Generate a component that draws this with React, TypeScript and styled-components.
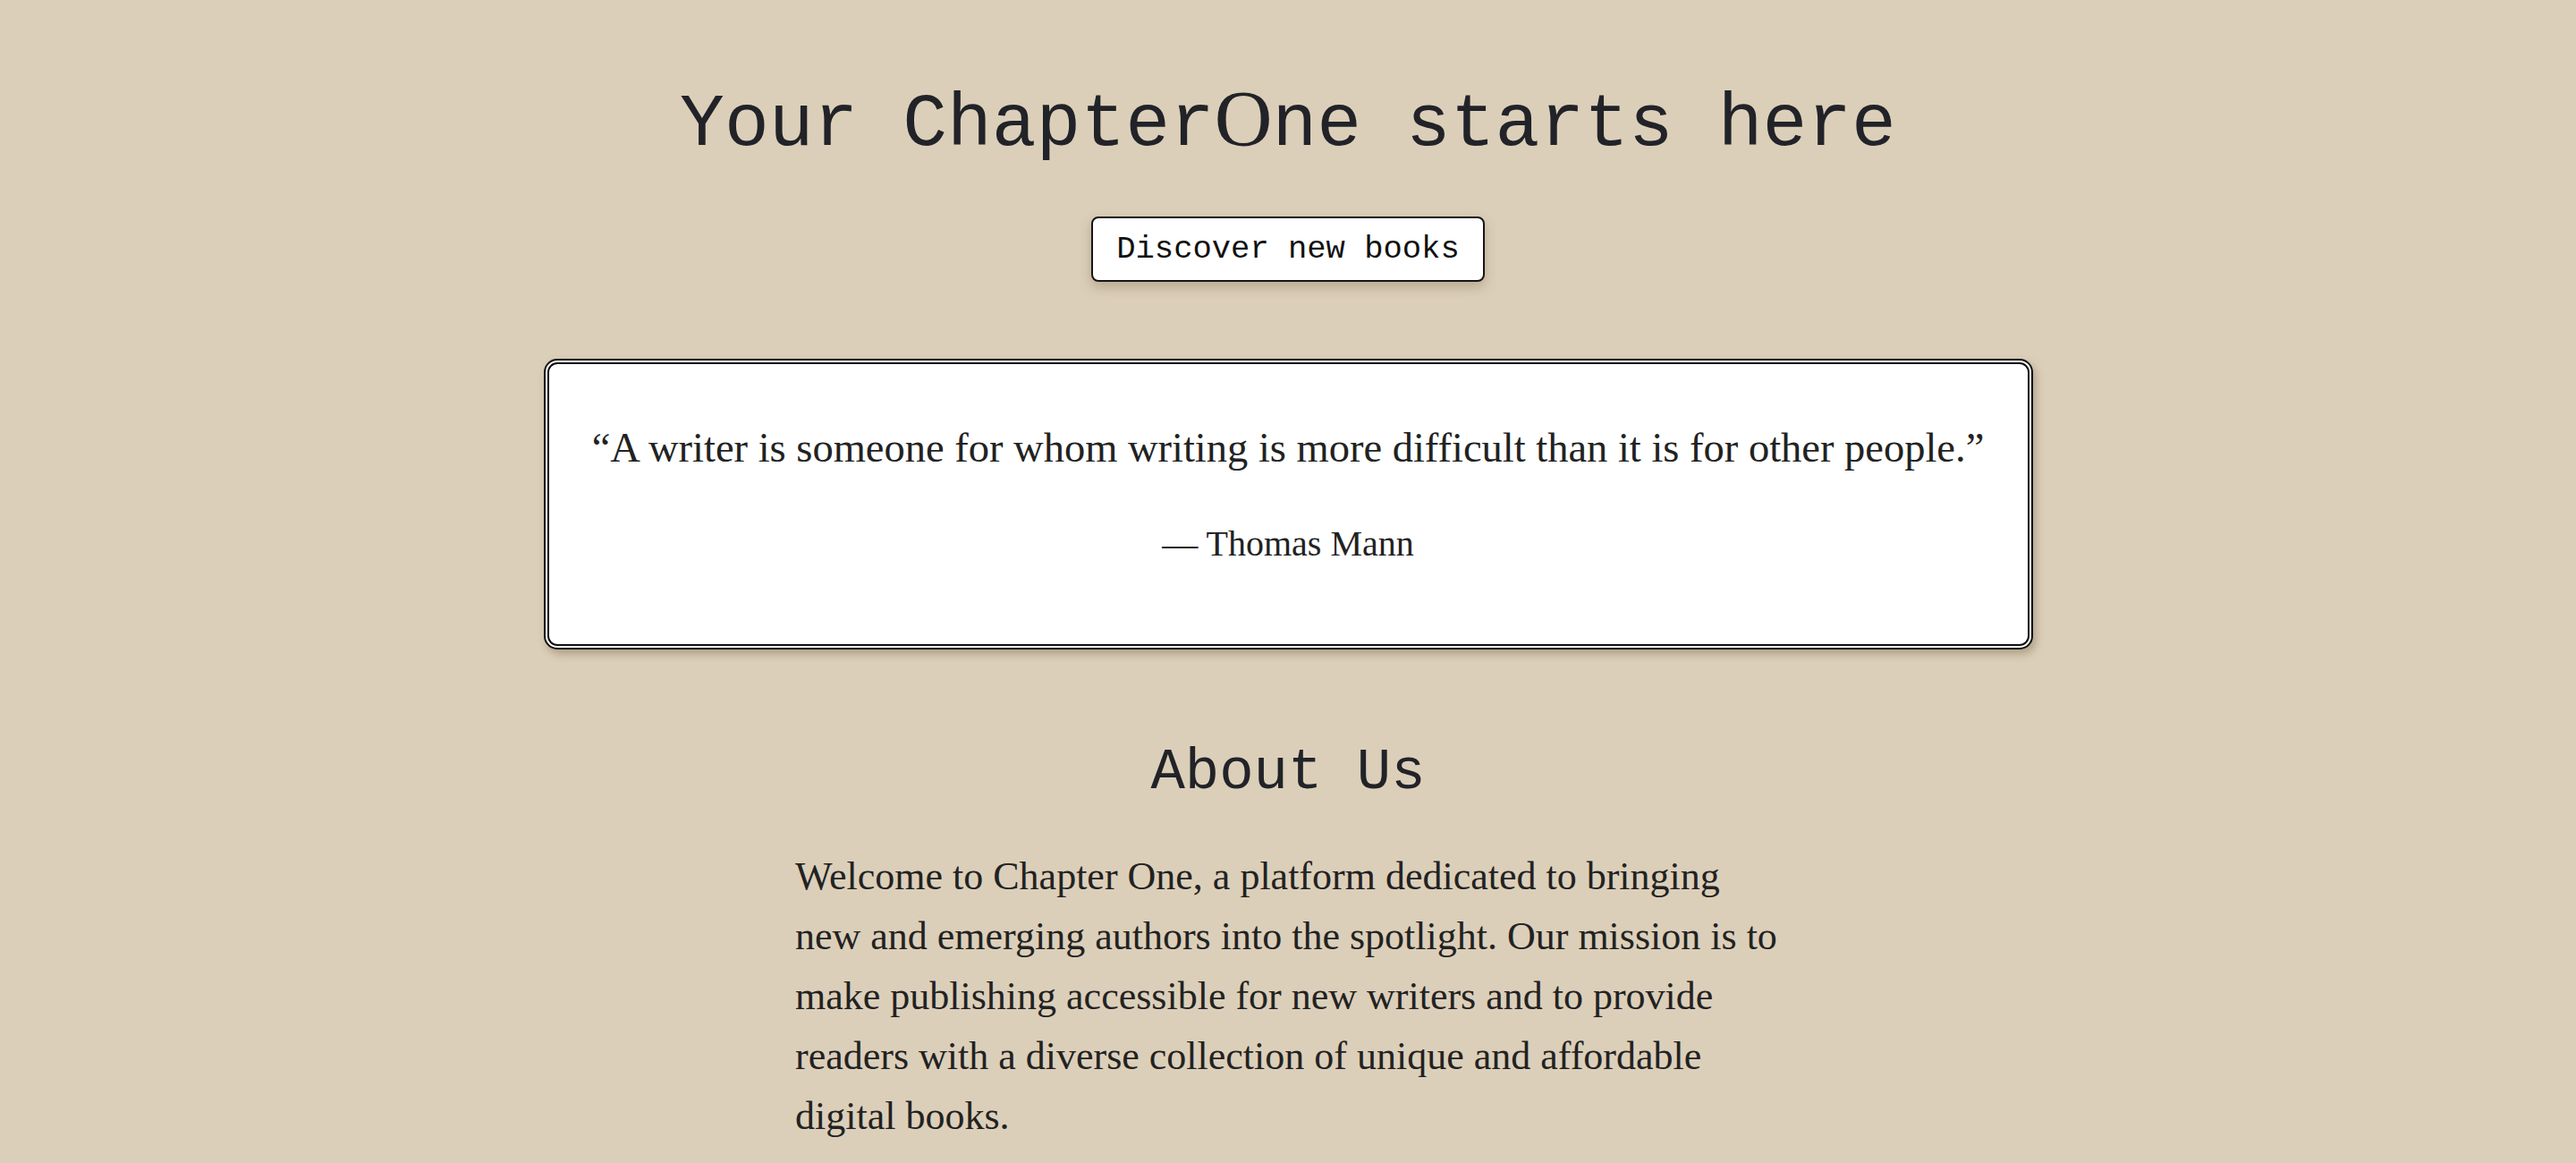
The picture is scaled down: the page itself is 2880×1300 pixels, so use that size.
import React from "react";
import styled, { createGlobalStyle } from "styled-components";

const GlobalStyle = createGlobalStyle`
  html, body {
    margin: 0;
    padding: 0;
    background: #dccfb9;
    color: #212328;
  }
  body {
    font-family: "Liberation Serif", serif;
  }
  * { box-sizing: border-box; }
`;

const Page = styled.main`
  min-height: 1300px;
  display: flex;
  flex-direction: column;
  align-items: center;
  padding-top: 82px;
`;

const Title = styled.h1`
  margin: 0;
  font-family: "Liberation Mono", "DejaVu Sans Mono", monospace;
  font-weight: 400;
  font-size: 83px;
  line-height: 100px;
  color: #212328;
  white-space: nowrap;
`;

const Swash = styled.span`
  font-family: "Liberation Serif", serif;
  font-weight: 400;
  font-size: 1.08em;
`;

const DiscoverButton = styled.button`
  margin-top: 52px;
  padding: 0 26px;
  height: 73px;
  background: #ffffff;
  border: 2px solid #151515;
  border-radius: 8px;
  box-shadow: 0 6px 14px rgba(90, 70, 40, 0.28);
  font-family: "Liberation Mono", "DejaVu Sans Mono", monospace;
  font-size: 35.5px;
  color: #111;
  cursor: pointer;
`;

const QuoteCard = styled.figure`
  margin: 86px 0 0;
  width: 1665px;
  height: 325px;
  background: #ffffff;
  border: 6px double #111;
  border-radius: 15px;
  box-shadow: 3px 5px 10px rgba(90, 70, 40, 0.35);
  display: flex;
  flex-direction: column;
  align-items: center;
  padding-top: 59px;
`;

const QuoteText = styled.blockquote`
  margin: 0;
  font-family: "Liberation Serif", serif;
  font-size: 46.5px;
  line-height: 70px;
  color: #222;
  white-space: nowrap;
`;

const Caption = styled.figcaption`
  margin-top: 42px;
  font-family: "Liberation Serif", serif;
  font-size: 40px;
  line-height: 60px;
  color: #222;
`;

const SectionTitle = styled.h2`
  margin: 100px 0 0;
  font-family: "Liberation Mono", "DejaVu Sans Mono", monospace;
  font-weight: 400;
  font-size: 64px;
  line-height: 76px;
  color: #212328;
`;

const Paragraph = styled.p`
  margin: 44px 0 0;
  width: 1102px;
  font-family: "Liberation Serif", serif;
  font-size: 44px;
  line-height: 67px;
  color: #222;
`;

export default function App() {
  return (
    <>
      <GlobalStyle />
      <Page>
        <Title>
          Your Chapter<Swash>O</Swash>ne starts here
        </Title>
        <DiscoverButton>Discover new books</DiscoverButton>
        <QuoteCard>
          <QuoteText>
            “A writer is someone for whom writing is more difficult than it is for other people.”
          </QuoteText>
          <Caption>— Thomas Mann</Caption>
        </QuoteCard>
        <SectionTitle>About Us</SectionTitle>
        <Paragraph>
          Welcome to Chapter One, a platform dedicated to bringing new and emerging authors into
          the spotlight. Our mission is to make publishing accessible for new writers and to provide
          readers with a diverse collection of unique and affordable digital books.
        </Paragraph>
      </Page>
    </>
  );
}
